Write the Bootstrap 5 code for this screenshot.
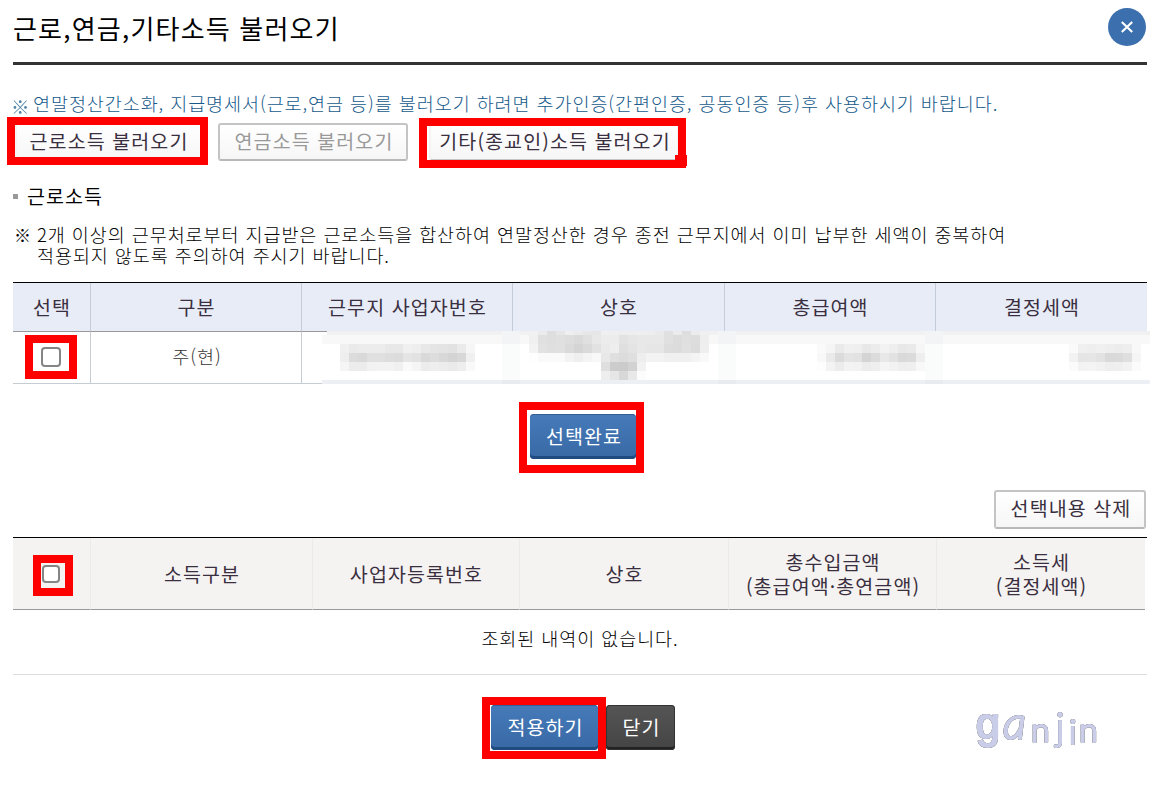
<!DOCTYPE html>
<html lang="ko">
<head>
    <meta charset="UTF-8">
    <meta name="viewport" content="width=device-width, initial-scale=1.0">
    <title>근로,연금,기타소득 불러오기</title>
    <!-- Bootstrap CSS -->
    <link href="https://cdn.jsdelivr.net/npm/bootstrap@5.3.2/dist/css/bootstrap.min.css" rel="stylesheet">
    <style>
        body {
            min-height: 100vh;
            font-family: "Noto Sans CJK KR", sans-serif;
            font-weight: 300;
            font-size: 18.5px;
            line-height: 21px;
            letter-spacing: .92px;
            color: #000;
            background: #fff;
            overflow: hidden;
            white-space: nowrap;
        }
        .popup {
            padding: 0 9px 0 13px;
        }
        .popup-head {
            height: 65px;
            padding-bottom: 7px;
            border-bottom: 3px solid #333;
        }
        .popup-head h1 {
            font-size: 26px;
            font-weight: 400;
            letter-spacing: 1.2px;
        }
        .close-btn {
            width: 38px;
            height: 38px;
            margin: 8px 1px 0 0;
        }
        .notice {
            height: 22px;
            margin-top: 28px;
            padding-bottom: 1px;
            color: #15598a;
        }
        .notice i {
            width: 19px;
            margin-left: -2px;
            margin-right: 3px;
            font-style: normal;
            opacity: .75;
            padding-top: 5px;
        }
        .btn-row {
            margin-top: 8px;
        }
        .popup .btn {
            font-size: 19.5px;
            font-weight: 400;
            line-height: 20px;
            letter-spacing: 1.1px;
            padding: 0 0 2px 2px;
            border-radius: 4px;
        }
        .popup .btn-line {
            height: 38px;
            color: #3a2f40;
            background: linear-gradient(#fff, #f6f6f6);
            border: 2px solid #c4c4c4;
            border-bottom-color: #b8b8b8;
            border-radius: 3px;
        }
        .popup .btn-line:disabled {
            color: #999;
            opacity: 1;
        }
        .popup .btn-blue,
        .popup .btn-dark {
            height: 45px;
            color: #fff;
            border: 0;
        }
        .popup .btn-blue {
            background: linear-gradient(#467ab9, #3869a5);
            box-shadow: inset 0 1px #345f94, inset 0 -3px #204b80;
        }
        .popup .btn-dark {
            background: linear-gradient(#555, #444);
            box-shadow: inset 0 0 0 1px #333, inset 0 -3px #222;
        }
        .popup .w-earned { width: 188px; padding-left: 0; border-color: #f4f4f4; }
        .w-pension { width: 190px; }
        .popup .w-other { width: 250px; border-color: #f4f4f4; border-bottom-color: #c4c4c4; }
        .w-done { width: 106px; }
        .popup .w-delete { width: 152px; height: 39px; padding-bottom: 4px; }
        .w-apply { width: 107px; }
        .w-close { width: 69px; }

        .earned-box { margin: 0 15px 0 2px; }
        .other-box { margin-left: 21px; }
        .done-row { margin: 30px 0 31px 517px; }
        .delete-row { padding-right: 1px; }
        .action-row { margin: 30px 0 0 478px; gap: 8px; }

        /* red callout frames */
        .callout {
            position: absolute;
            border: 8px solid #f00;
            pointer-events: none;
        }
        .callout-earned { left: -8px; top: -6px; width: 201px; height: 48px; }
        .callout-other { left: -10px; top: -5px; width: 267px; height: 50px; }
        .callout-other::after {
            content: "";
            position: absolute;
            right: -9px;
            bottom: -6px;
            width: 12px;
            height: 11px;
            background: #f00;
        }
        .callout-done { left: -11px; top: -12px; width: 125px; height: 71px; }
        .callout-apply { left: -9px; top: -8px; width: 124px; height: 62px; }
        .callout-check { left: -16px; top: -12px; width: 52px; height: 44px; }
        .callout-all { left: -9px; top: -10px; width: 40px; height: 41px; }

        .sub-title {
            height: 20px;
            margin-top: 25px;
            padding-bottom: 2px;
            font-size: 19.5px;
            font-weight: 400;
            letter-spacing: 1.1px;
        }
        .sub-title::before {
            content: "";
            width: 5px;
            height: 5px;
            margin: 2px 9px 0 0;
            background: #999;
        }
        .guide {
            margin: 18px 0 16px;
        }
        .guide b {
            width: 24px;
            padding-left: 1px;
            font-size: 17px;
        }
        .grid {
            table-layout: fixed;
            border-collapse: separate;
            border-spacing: 0;
            text-align: center;
            vertical-align: middle;
        }
        .grid th {
            padding: 0 0 2px 1px;
            font-size: 19.5px;
            font-weight: 400;
            letter-spacing: 1.1px;
            color: #3a2f40;
            border-bottom: 1px solid #999;
        }
        .grid td {
            padding: 0 0 2px 2px;
        }
        .grid th:last-child,
        .grid td:last-child {
            border-right: 0 !important;
        }
        .income {
            width: 1134px;
            border-top: 1px solid #000;
        }
        .income th {
            height: 49px;
            background: #e7ecf6;
            border-right: 1px solid #c5cdda;
        }
        .income td {
            height: 52px;
            color: #333;
            border-right: 1px solid #c5cdd3;
            border-bottom: 1px solid #c5cdd3;
        }
        .chosen-wrap {
            margin-top: 8px;
            border-top: 1px solid #000;
        }
        .chosen {
            width: 1132px;
        }
        .chosen th {
            height: 72px;
            padding-bottom: 0;
            line-height: 24px;
            background: #f5f3f1;
            border-right: 1px solid #ebebeb;
        }
        .grid .check-cell {
            padding-left: 0;
            padding-right: 2px;
        }
        .empty {
            height: 65px;
            padding-bottom: 8px;
            border-bottom: 1px solid #ddd;
        }
        .check {
            display: block;
            width: 20px;
            height: 20px;
            margin: 0;
            appearance: none;
            background: #fff;
            border: 2px solid #858585;
            border-radius: 4px;
        }
        .check-sm {
            width: 18px;
            height: 18px;
        }
        .mosaic {
            position: absolute;
            left: 309px;
            top: 49px;
        }
        .sign {
            position: absolute;
            left: 970px;
            top: 695px;
            filter: drop-shadow(0 0 .6px #777) drop-shadow(0 0 .5px #999);
        }
    </style>
</head>
<body>
<div class="popup">
    <div class="popup-head d-flex justify-content-between align-items-start">
        <h1 class="mb-0 align-self-center">근로,연금,기타소득 불러오기</h1>
        <svg class="close-btn" viewBox="0 0 38 38" role="button" aria-label="닫기">
            <circle cx="19" cy="19" r="19" fill="#3b6fad"/>
            <path d="M13.8 14l10.4 10M24.2 14l-10.4 10" stroke="#fff" stroke-width="2.2"/>
        </svg>
    </div>

    <div class="notice d-flex align-items-center"><i>※</i><span>연말정산간소화, 지급명세서(근로,연금 등)를 불러오기 하려면 추가인증(간편인증, 공동인증 등)후 사용하시기 바랍니다.</span></div>

    <div class="btn-row d-flex">
        <div class="position-relative earned-box">
            <button type="button" class="btn btn-line w-earned">근로소득 불러오기</button>
            <span class="callout callout-earned"></span>
        </div>
        <button type="button" class="btn btn-line w-pension" disabled>연금소득 불러오기</button>
        <div class="position-relative other-box">
            <button type="button" class="btn btn-line w-other">기타(종교인)소득 불러오기</button>
            <span class="callout callout-other"></span>
        </div>
    </div>

    <div class="sub-title d-flex align-items-center">근로소득</div>
    <div class="guide d-flex">
        <b>※</b>
        <div>2개 이상의 근무처로부터 지급받은 근로소득을 합산하여 연말정산한 경우 종전 근무지에서 이미 납부한 세액이 중복하여<br>적용되지 않도록 주의하여 주시기 바랍니다.</div>
    </div>

    <!-- Income rows -->
    <div class="position-relative">
        <table class="grid income">
            <colgroup>
                <col width="78"><col width="211"><col width="211"><col width="212"><col width="211"><col width="211">
            </colgroup>
            <thead>
            <tr><th>선택</th><th>구분</th><th>근무지 사업자번호</th><th>상호</th><th>총급여액</th><th>결정세액</th></tr>
            </thead>
            <tbody>
            <tr>
                <td class="check-cell">
                    <div class="d-flex justify-content-center">
                        <div class="position-relative">
                            <input type="checkbox" class="check">
                            <span class="callout callout-check"></span>
                        </div>
                    </div>
                </td>
                <td>주(현)</td><td></td><td></td><td></td><td></td>
            </tr>
            </tbody>
        </table>
        <svg id="mosaic" class="mosaic" width="828" height="53" shape-rendering="crispEdges"></svg>
    </div>

    <div class="d-flex done-row">
        <div class="position-relative">
            <button type="button" class="btn btn-blue w-done">선택완료</button>
            <span class="callout callout-done"></span>
        </div>
    </div>

    <div class="d-flex justify-content-end delete-row">
        <button type="button" class="btn btn-line w-delete">선택내용 삭제</button>
    </div>

    <!-- Selected income -->
    <div class="chosen-wrap">
        <table class="grid chosen">
            <colgroup>
                <col width="78"><col width="222"><col width="207"><col width="209"><col width="208"><col width="208">
            </colgroup>
            <thead>
            <tr>
                <th class="check-cell">
                    <div class="d-flex justify-content-center">
                        <div class="position-relative">
                            <input type="checkbox" class="check check-sm">
                            <span class="callout callout-all"></span>
                        </div>
                    </div>
                </th>
                <th>소득구분</th><th>사업자등록번호</th><th>상호</th>
                <th>총수입금액<br>(총급여액·총연금액)</th>
                <th>소득세<br>(결정세액)</th>
            </tr>
            </thead>
        </table>
        <div class="empty d-flex justify-content-center align-items-center">조회된 내역이 없습니다.</div>
    </div>

    <div class="d-flex action-row">
        <div class="position-relative">
            <button type="button" class="btn btn-blue w-apply">적용하기</button>
            <span class="callout callout-apply"></span>
        </div>
        <button type="button" class="btn btn-dark w-close">닫기</button>
    </div>
</div>

<svg class="sign" width="140" height="62">
    <text font-family="Lato, sans-serif" font-size="34" letter-spacing="0" fill="#c9cde8" stroke="#c9cde8" stroke-width="2" stroke-linejoin="round"><tspan x="6" y="43" font-family="Liberation Sans" font-size="43">g</tspan><tspan x="33" y="44" font-size="46" font-style="italic">a</tspan><tspan x="61" y="47">n</tspan><tspan x="86" y="45" font-size="37">j</tspan><tspan x="99" y="49">i</tspan><tspan x="109" y="47">n</tspan></text>
</svg>

<script>
    // Masked values: [row, first column, grey levels of the cells]
    const masked = [
        [0, 24, 'ebdee6efebe7e6f0efeeeeefeeeae0ebdeecf0'],
        [1, 23, 'f0e0dee0dddae0e8ecece2e6e8e8e8e0dcdfddee'],
        [2, 2, 'f0eaececece8e8f0eee8e5e4e2eaf6'],
        [2, 23, 'f3e2dfe0dad4dae2eaeedfe4e8e6e6dddce0dcef'],
        [2, 55, 'faf5eaf0efe8ecf2eee8eaf6'],
        [2, 83, 'faf0eef0eeeceef8'],
        [3, 2, 'eedcd9e0e0dddce5e2d9ddd8d4d8f0'],
        [3, 23, 'fefafafaf3eff4f8e8dfdcdfeef3f3f0f0f0f4f9'],
        [3, 55, 'f8eadbe4e2d4dce8e2d9dbee'],
        [3, 83, 'f2e5e6e2d9dadff5'],
        [4, 2, 'f5ececf2f3f3f0faf5eceeeceaeef9'],
        [4, 31, 'dfcccbd2f2'],
        [4, 55, 'fdf3ecf3f2eceef5f2eeeff8'],
        [4, 83, 'fbf3f4f2eeeff2fb'],
        [5, 31, 'eee6d8e8fc']
    ];
    const rowTop = [0, 4, 13, 22, 31, 40, 49, 53];
    const mosaic = document.getElementById('mosaic');

    function addCell(x, row, width, fill) {
        const rect = document.createElementNS('http://www.w3.org/2000/svg', 'rect');
        rect.setAttribute('x', x);
        rect.setAttribute('y', rowTop[row]);
        rect.setAttribute('width', width);
        rect.setAttribute('height', rowTop[row + 1] - rowTop[row]);
        rect.setAttribute('fill', fill);
        mosaic.appendChild(rect);
    }

    ['#f1f1f1', '#f8f8f8', '#fff', '#fff', '#fff', '#fff', '#ecf0f4'].forEach((fill, row) => {
        addCell(row === 0 ? 5 : 0, row, 828, fill);
        // faint traces of the column lines
        [[180, 18], [396, 18], [603, 18]].forEach(([x, w]) => {
            addCell(x, row, w, row === 6 ? '#e8ecf0' : row < 2 ? '#f3f4f5' : '#fafbfb');
        });
    });
    masked.forEach(([row, col, levels]) => {
        levels.match(/../g).forEach((v, i) => addCell((col + i) * 9, row, 9, '#' + v + v + v));
    });
</script>
<script src="https://cdn.jsdelivr.net/npm/bootstrap@5.3.2/dist/js/bootstrap.bundle.min.js"></script>
</body>
</html>
